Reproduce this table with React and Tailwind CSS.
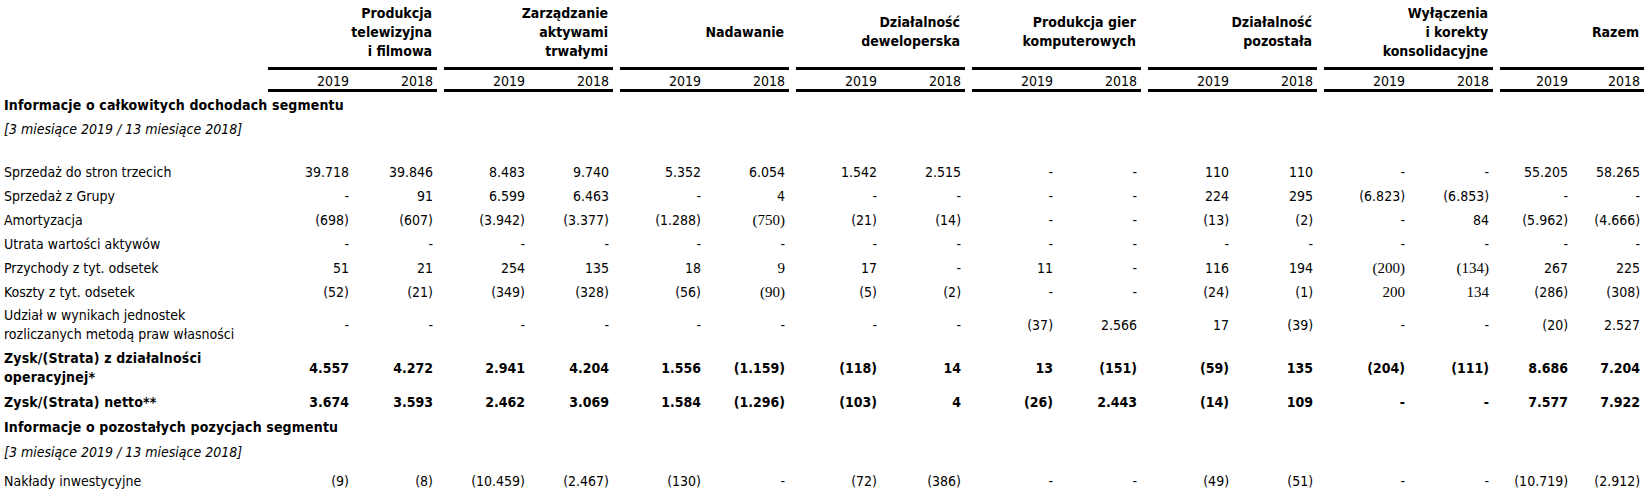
const groups = [
  ['Produkcja', 'telewizyjna', 'i filmowa'],
  ['Zarządzanie', 'aktywami', 'trwałymi'],
  ['Nadawanie'],
  ['Działalność', 'deweloperska'],
  ['Produkcja gier', 'komputerowych'],
  ['Działalność', 'pozostała'],
  ['Wyłączenia', 'i korekty', 'konsolidacyjne'],
  ['Razem'],
];

// s: serif cells (index list) – the source mixes fonts in a few cells
const rows = [
  { label: ['Sprzedaż do stron trzecich'], h: 'h-[24px]', v: ['39.718', '39.846', '8.483', '9.740', '5.352', '6.054', '1.542', '2.515', '-', '-', '110', '110', '-', '-', '55.205', '58.265'] },
  { label: ['Sprzedaż z Grupy'], h: 'h-[24px]', v: ['-', '91', '6.599', '6.463', '-', '4', '-', '-', '-', '-', '224', '295', '(6.823)', '(6.853)', '-', '-'] },
  { label: ['Amortyzacja'], h: 'h-[24px]', v: ['(698)', '(607)', '(3.942)', '(3.377)', '(1.288)', '(750)', '(21)', '(14)', '-', '-', '(13)', '(2)', '-', '84', '(5.962)', '(4.666)'], s: [5] },
  { label: ['Utrata wartości aktywów'], h: 'h-[24px]', v: Array(16).fill('-') },
  { label: ['Przychody z tyt. odsetek'], h: 'h-[24px]', v: ['51', '21', '254', '135', '18', '9', '17', '-', '11', '-', '116', '194', '(200)', '(134)', '267', '225'], s: [5, 12, 13] },
  { label: ['Koszty z tyt. odsetek'], h: 'h-[24px]', v: ['(52)', '(21)', '(349)', '(328)', '(56)', '(90)', '(5)', '(2)', '-', '-', '(24)', '(1)', '200', '134', '(286)', '(308)'], s: [5, 12, 13] },
  { label: ['Udział w wynikach jednostek', 'rozliczanych metodą praw własności'], h: 'h-[42px]', v: ['-', '-', '-', '-', '-', '-', '-', '-', '(37)', '2.566', '17', '(39)', '-', '-', '(20)', '2.527'] },
  { label: ['Zysk/(Strata) z działalności', 'operacyjnej*'], h: 'h-[44px]', bold: true, v: ['4.557', '4.272', '2.941', '4.204', '1.556', '(1.159)', '(118)', '14', '13', '(151)', '(59)', '135', '(204)', '(111)', '8.686', '7.204'] },
  { label: ['Zysk/(Strata) netto**'], h: 'h-[24px]', bold: true, v: ['3.674', '3.593', '2.462', '3.069', '1.584', '(1.296)', '(103)', '4', '(26)', '2.443', '(14)', '109', '-', '-', '7.577', '7.922'] },
];

const capex = ['(9)', '(8)', '(10.459)', '(2.467)', '(130)', '-', '(72)', '(386)', '-', '-', '(49)', '(51)', '-', '-', '(10.719)', '(2.912)'];

function ValueCells({ values, serif = [] }) {
  const cells = [];
  values.forEach((val, i) => {
    cells.push(
      <td key={i} className={`pr-[4px] text-right whitespace-nowrap ${serif.includes(i) ? "font-['Liberation_Serif',serif] text-[15px]" : ''}`}>
        {val}
      </td>
    );
    if (i % 2 === 1 && i < 14) cells.push(<td key={`s${i}`} />);
  });
  return cells;
}

function Label({ lines, bold }) {
  return (
    <td className={`pl-[4px] leading-[19px] whitespace-nowrap ${bold ? 'tracking-[0.15px]' : ''}`}>
      {lines.map((l, i) => (
        <div key={i}>{l}</div>
      ))}
    </td>
  );
}

function SectionRow({ children, h, italic }) {
  return (
    <tr className={h}>
      <td colSpan={24} className={`pl-[4px] whitespace-nowrap ${italic ? 'italic' : 'font-bold tracking-[0.15px]'}`}>
        {children}
      </td>
    </tr>
  );
}

export default function App() {
  return (
    <div className="h-[495px] w-[1644px] overflow-hidden bg-white text-[14px] text-black font-['DejaVu_Sans_Condensed','DejaVu_Sans',sans-serif] font-stretch-condensed">
      <table className="w-[1644px] table-fixed border-separate border-spacing-0">
        <colgroup>
          <col className="w-[268px]" />
          {groups.map((_, i) =>
            i < 7 ? (
              [<col key={`a${i}`} className="w-[85px]" />, <col key={`b${i}`} className="w-[84px]" />, <col key={`c${i}`} className="w-[7px]" />]
            ) : (
              [<col key={`a${i}`} className="w-[72px]" />, <col key={`b${i}`} className="w-[72px]" />]
            )
          )}
        </colgroup>
        <thead>
          <tr>
            <td />
            {groups.map((g, i) => [
              <td key={`g${i}`} colSpan={2} className="border-b-[3px] border-black pb-[3px] pr-[5px] font-bold">
                <div className="flex h-[64px] flex-col items-end justify-center text-right leading-[19px]">
                  {g.map((l) => (
                    <div key={l} className="whitespace-nowrap">{l}</div>
                  ))}
                </div>
              </td>,
              i < 7 ? <td key={`gs${i}`} /> : null,
            ])}
          </tr>
          <tr>
            <td />
            {groups.map((_, i) => [
              <td key={`y1${i}`} className="border-b-[3px] border-black pt-[3px] pr-[4px] text-right leading-[16px]">2019</td>,
              <td key={`y2${i}`} className="border-b-[3px] border-black pt-[3px] pr-[4px] text-right leading-[16px]">2018</td>,
              i < 7 ? <td key={`ys${i}`} /> : null,
            ])}
          </tr>
        </thead>
        <tbody>
          <SectionRow h="h-[26px]">Informacje o całkowitych dochodach segmentu</SectionRow>
          <SectionRow h="h-[23px]" italic>[3 miesiące 2019 / 13 miesiące 2018]</SectionRow>
          <tr className="h-[19px]">
            <td colSpan={24} />
          </tr>
          {rows.map((r) => (
            <tr key={r.label[0]} className={`${r.h} ${r.bold ? 'font-bold' : ''}`}>
              <Label lines={r.label} bold={r.bold} />
              <ValueCells values={r.v} serif={r.s} />
            </tr>
          ))}
          <SectionRow h="h-[26px]">Informacje o pozostałych pozycjach segmentu</SectionRow>
          <SectionRow h="h-[24px]" italic>[3 miesiące 2019 / 13 miesiące 2018]</SectionRow>
          <tr className="h-[34px]">
            <Label lines={['Nakłady inwestycyjne']} />
            <ValueCells values={capex} />
          </tr>
        </tbody>
      </table>
    </div>
  );
}
